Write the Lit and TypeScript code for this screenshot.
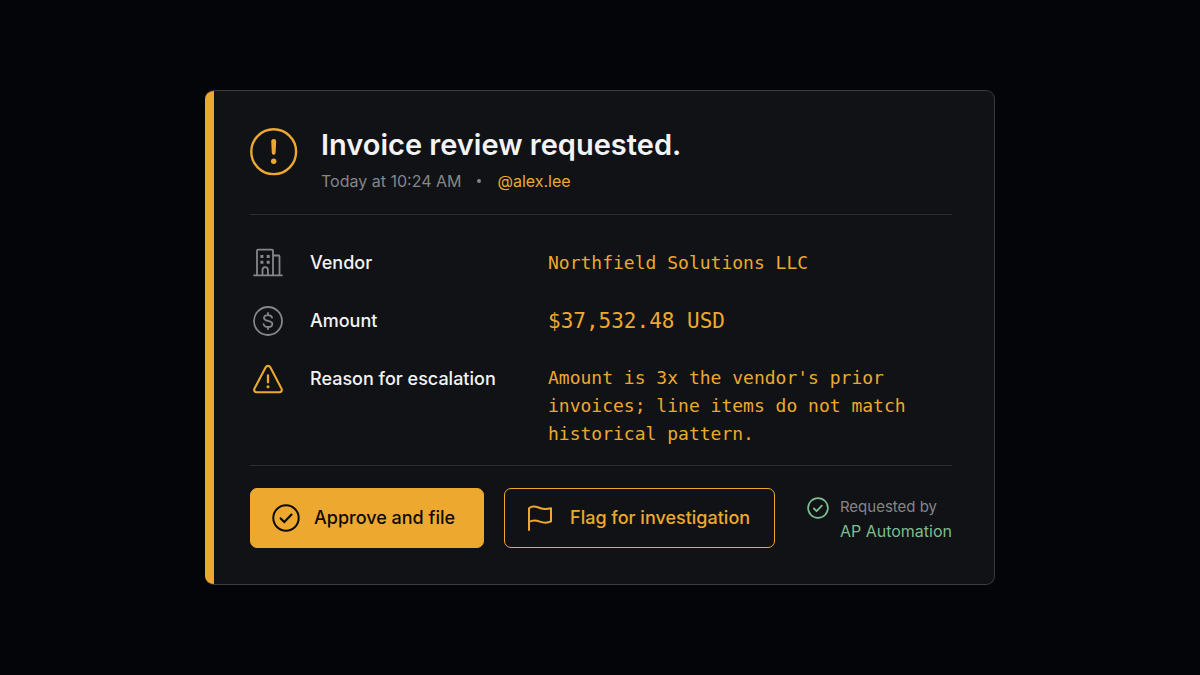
import { LitElement, html, css, svg } from "lit";
import { customElement, property } from "lit/decorators.js";
import { classMap } from "lit/directives/class-map.js";

const glyphs = {
  alert: svg`<circle cx="23.700" cy="23.700" r="22.400" stroke-width="2.400"/><path d="M21.200 13.600a2.500 2.500 0 0 1 5 0l-.6 11.200a1.900 1.900 0 0 1-3.800 0Z" fill="currentColor" stroke="none"/><circle cx="23.700" cy="33.300" r="2.700" fill="currentColor" stroke="none"/>`,
  building: svg`<path d="M1 27.300h28M4 27.300V2.700a1 1 0 0 1 1-1h14a1 1 0 0 1 1 1v24.600M20 7.500h5.500a1 1 0 0 1 1 1v18.800M9.500 27.300v-5.500a2.700 2.700 0 0 1 5.400 0v5.500"/><path d="M7.400 8.500h3M13.700 8.500h3M7.400 14.300h3M13.700 14.300h3" stroke-width="3" stroke-linecap="butt"/>`,
  dollar: svg`<circle cx="15" cy="15" r="14"/><path d="M19 11.600c-.5-1.700-1.900-2.500-4-2.500-2.400 0-4 1.100-4 2.900 0 4.200 8.300 1.700 8.300 6 0 1.900-1.700 3-4.200 3s-4.100-1-4.500-2.900M15 7v2M15 21v2.200"/>`,
  warning: svg`<path d="M12.700 3.300 1.500 24.600c-.9 1.800.2 3.700 2.300 3.700h22.400c2.100 0 3.200-1.900 2.300-3.700L17.300 3.300c-1-1.900-3.600-1.900-4.600 0Z" stroke-width="2.100"/><path d="M15 11.500v6.800" stroke-width="2.300"/><circle cx="15" cy="22.700" r="1.500" fill="currentColor" stroke="none"/>`,
  check: svg`<circle cx="14" cy="14" r="12.700" stroke-width="2"/><path d="m8.700 14.400 3.600 3.700 7.200-7.500" stroke-width="2.200"/>`,
  checkSmall: svg`<circle cx="11" cy="11" r="9.900" stroke-width="1.700"/><path d="m6.900 11.500 2.700 2.700 5.200-5.600" stroke-width="1.800"/>`,
  flag: svg`<path d="M3 26V4.200C7 .9 10.500 2.900 13.800 4c3.600 1.300 7.500 1.200 11.200.2v13.200c-3.600 1.700-7.600 1.500-11.200.2-3.400-1.300-7.300-1.700-10.800.4" stroke-width="2"/>`,
};

type GlyphName = keyof typeof glyphs;

@customElement("ui-icon")
class UiIcon extends LitElement {
  @property() name: GlyphName = "alert";
  @property({ type: Number }) size = 30;

  static styles = css`
    :host {
      display: block;
      flex: none;
    }
    .glyph {
      display: block;
      fill: none;
      stroke: currentColor;
      stroke-width: 1.8;
      stroke-linecap: round;
      stroke-linejoin: round;
    }
  `;

  render() {
    return html`<svg
      class="glyph"
      width=${this.size}
      height=${this.size}
      viewBox="0 0 ${this.size} ${this.size}"
      aria-hidden="true"
    >
      ${glyphs[this.name]}
    </svg>`;
  }
}

interface Detail {
  icon: GlyphName;
  label: string;
  value: string;
  kind?: "money" | "reason";
}

@customElement("app-root")
class AppRoot extends LitElement {
  details: Detail[] = [
    { icon: "building", label: "Vendor", value: "Northfield Solutions LLC" },
    { icon: "dollar", label: "Amount", value: "$37,532.48 USD", kind: "money" },
    {
      icon: "warning",
      label: "Reason for escalation",
      value: "Amount is 3x the vendor's prior invoices; line items do not match historical pattern.",
      kind: "reason",
    },
  ];

  static styles = css`
    :host {
      --amber: #eda92f;
      --muted: #85868a;
      --line: #2d2e32;
      --green: #7fbd8e;
      display: grid;
      place-items: center;
      box-sizing: border-box;
      min-height: 100vh;
      padding: 24px;
      background: #030509;
      color: #f3f3f5;
      font-family: Inter, "Liberation Sans", sans-serif;
      font-size: 18px;
      line-height: 28px;
    }
    .card {
      display: flex;
      box-sizing: border-box;
      width: 100%;
      max-width: 790px;
      overflow: hidden;
      border: 1px solid #3b3c40;
      border-left: 0;
      border-radius: 9px;
      background: #101215;
    }
    .accent {
      flex: none;
      width: 9px;
      background: var(--amber);
    }
    .content {
      flex: 1;
      min-width: 0;
      padding: 34px 42px 36px 36px;
    }
    .header {
      display: flex;
      align-items: flex-start;
      gap: 23px;
      padding-bottom: 21px;
      border-bottom: 1px solid var(--line);
    }
    .status {
      padding-top: 3px;
      color: var(--amber);
    }
    .title {
      margin: 0 0 4px;
      font-size: 29px;
      font-weight: 600;
      line-height: 40px;
    }
    .meta {
      display: flex;
      align-items: center;
      gap: 16px;
      margin: 0;
      color: var(--muted);
      font-size: 16px;
      line-height: 24px;
    }
    .dot {
      width: 4px;
      height: 4px;
      border-radius: 50%;
      background: var(--muted);
    }
    .mention {
      color: var(--amber);
      text-decoration: none;
    }
    .details {
      display: grid;
      gap: 28px;
      margin: 0;
      padding: 33px 0 17px;
      border-bottom: 1px solid var(--line);
    }
    .row {
      display: grid;
      grid-template-columns: 298px minmax(0, 1fr);
      align-items: center;
    }
    .row.reason {
      align-items: start;
    }
    .term {
      display: flex;
      gap: 27px;
      padding-left: 3px;
      font-weight: 500;
      line-height: 30px;
    }
    .term ui-icon {
      color: var(--muted);
    }
    .reason ui-icon {
      color: var(--amber);
    }
    .value {
      max-width: 364px;
      margin: 0;
      color: var(--amber);
      font-family: "DejaVu Sans Mono", "Liberation Mono", monospace;
    }
    .money .value {
      font-size: 21px;
    }
    .footer {
      display: flex;
      flex-wrap: wrap;
      align-items: flex-start;
      gap: 20px;
      padding-top: 22px;
    }
    .button {
      display: flex;
      align-items: center;
      gap: 16px;
      height: 60px;
      padding: 0 24px 0 21px;
      border: 1px solid var(--amber);
      border-radius: 7px;
      background: transparent;
      color: var(--amber);
      font: inherit;
      font-weight: 500;
      cursor: pointer;
    }
    .button.primary {
      gap: 14px;
      padding-right: 28px;
      background: var(--amber);
      color: #0d0b08;
    }
    .requester {
      display: flex;
      gap: 11px;
      margin-left: auto;
      padding-top: 6px;
      color: var(--muted);
      font-size: 15px;
      line-height: 25px;
    }
    .requester ui-icon {
      padding-top: 3px;
      color: var(--green);
    }
    .agent {
      display: block;
      color: var(--green);
      font-size: 16px;
    }
  `;

  render() {
    return html`
      <article class="card">
        <div class="accent"></div>
        <div class="content">
          <header class="header">
            <ui-icon class="status" name="alert" size="48"></ui-icon>
            <div>
              <h1 class="title">Invoice review requested.</h1>
              <p class="meta">
                <time>Today at 10:24 AM</time>
                <span class="dot"></span>
                <a class="mention" href="#alex.lee">@alex.lee</a>
              </p>
            </div>
          </header>
          <dl class="details">
            ${this.details.map(
              (d) => html`<div
                class=${classMap({ row: true, money: d.kind === "money", reason: d.kind === "reason" })}
              >
                <dt class="term"><ui-icon name=${d.icon} size="30"></ui-icon>${d.label}</dt>
                <dd class="value">${d.value}</dd>
              </div>`,
            )}
          </dl>
          <footer class="footer">
            <button class="button primary" type="button">
              <ui-icon name="check" size="28"></ui-icon>Approve and file
            </button>
            <button class="button" type="button">
              <ui-icon name="flag" size="28"></ui-icon>Flag for investigation
            </button>
            <div class="requester">
              <ui-icon name="checkSmall" size="22"></ui-icon>
              <div>Requested by <span class="agent">AP Automation</span></div>
            </div>
          </footer>
        </div>
      </article>
    `;
  }
}
